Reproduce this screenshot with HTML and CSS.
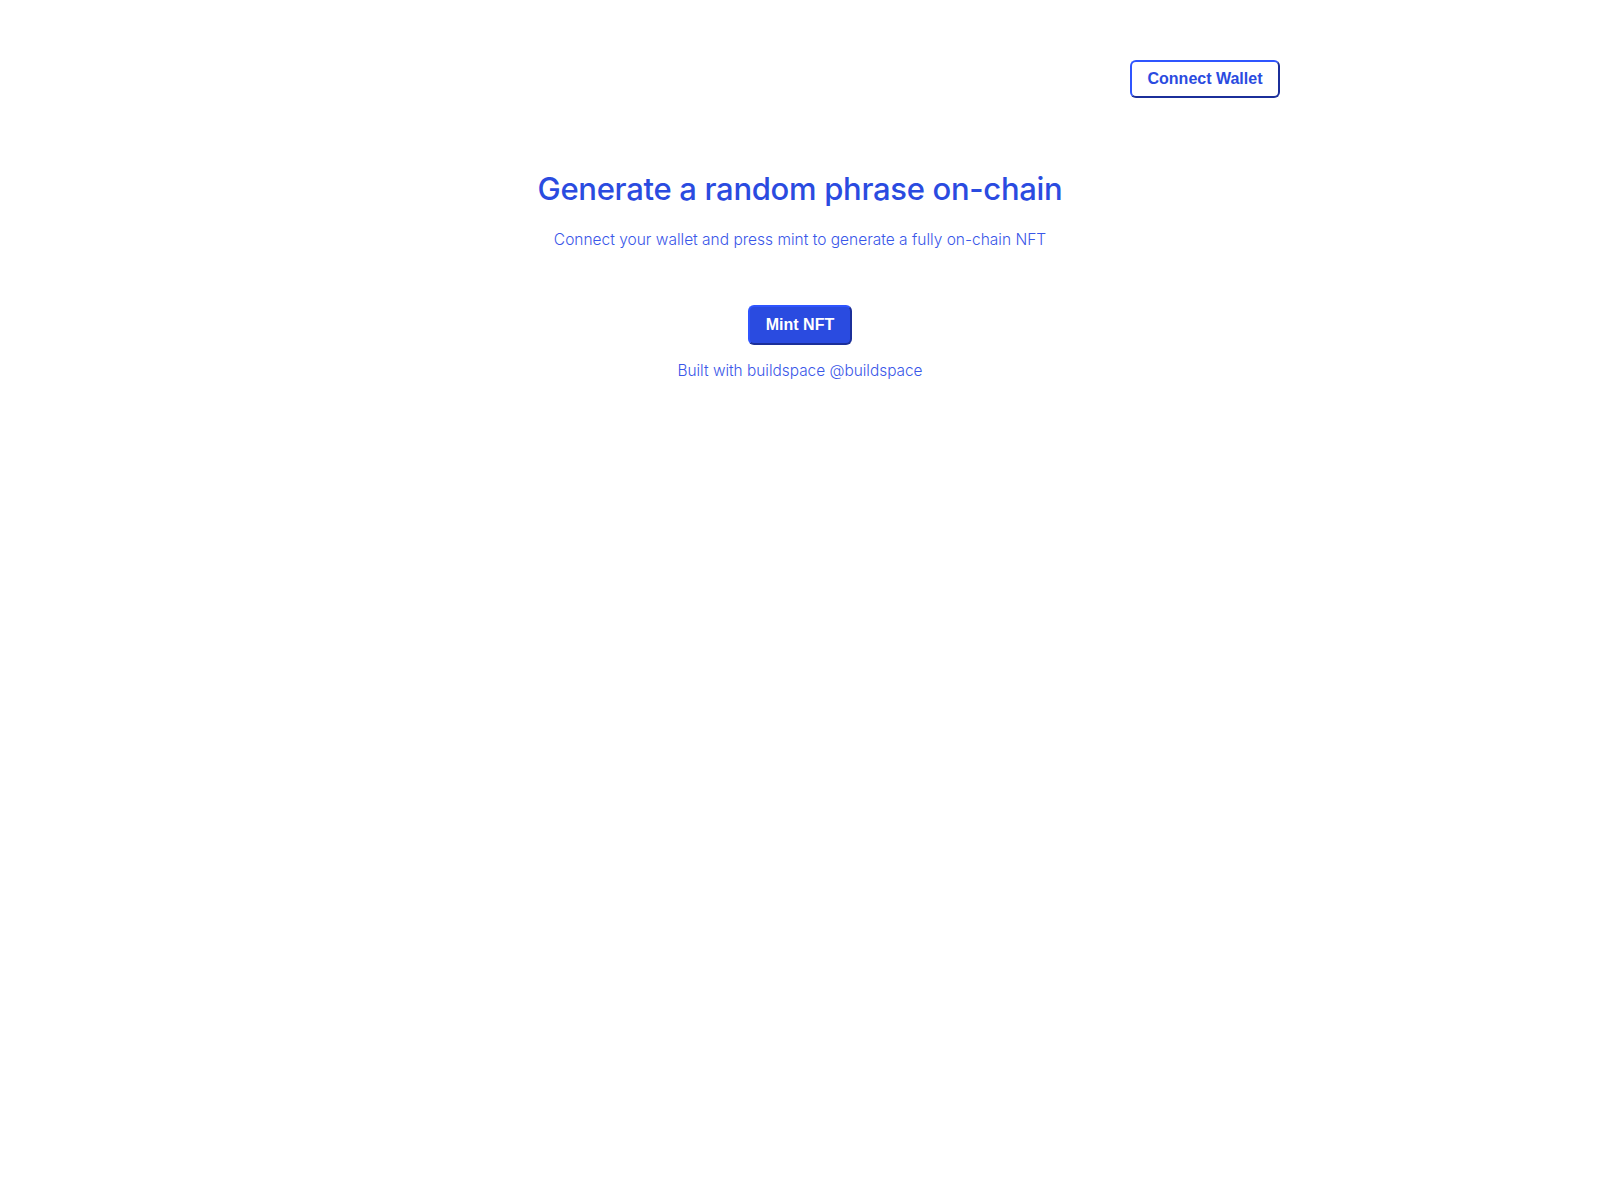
FILE: index.html
```html
<!DOCTYPE html>
<html lang="en">

<head>
    <meta charset="UTF-8">
    <meta name="viewport" content="width=device-width, initial-scale=1.0">
    <title>Random Phrase NFT</title>
    <link rel="stylesheet" href="styles.css">
</head>

<body>
    <div class="container">
        <div class="header">
            <button class="connect-button">Connect Wallet</button>
        </div>

        <div class="main">
            <h1>Generate a random phrase on-chain</h1>
            <p class="sub-text">Connect your wallet and press mint to generate a fully on-chain NFT</p>
            <button class="mint-button">Mint NFT</button>
            <p class="footer-text">Built with buildspace @buildspace</p>
        </div>
    </div>
</body>

</html>
```

FILE: styles.css
```css
body {
    margin: 0;
    background-color: #fff;
    font-family: 'Inter', 'Noto Sans', sans-serif;
    color: #2a4be0;
}

.container {
    width: 960px;
    margin: 0 auto;
}

.header {
    display: flex;
    justify-content: flex-end;
    padding-top: 60px;
}

.connect-button {
    width: 150px;
    height: 38px;
    font-family: 'Liberation Sans', Arial, sans-serif;
    font-weight: bold;
    font-size: 16px;
    color: #2a4be0;
    background: #fff;
    border: 2px solid #2f55ff;
    border-right-color: #1b2f9a;
    border-bottom-color: #1b2f9a;
    border-radius: 6px;
    cursor: pointer;
}

.main {
    display: flex;
    flex-direction: column;
    align-items: center;
    text-align: center;
}

h1 {
    margin: 71px 0 0;
    font-size: 31px;
    font-weight: 500;
    letter-spacing: -0.3px;
    line-height: 40px;
    color: #2a4be0;
}

.sub-text {
    margin: 21px 0 0;
    font-size: 15.5px;
    font-weight: 300;
    line-height: 20px;
    color: #3a57e8;
}

.mint-button {
    margin-top: 55px;
    width: 104px;
    height: 40px;
    font-family: 'Liberation Sans', Arial, sans-serif;
    font-weight: bold;
    font-size: 16px;
    color: #fff;
    background: #2a4be0;
    border: 2px solid #2f55ff;
    border-right-color: #1b2f9a;
    border-bottom-color: #1b2f9a;
    border-radius: 6px;
    cursor: pointer;
}

.footer-text {
    margin: 16px 0 0;
    font-size: 15.4px;
    font-weight: 300;
    line-height: 20px;
    color: #3a57e8;
}
```
